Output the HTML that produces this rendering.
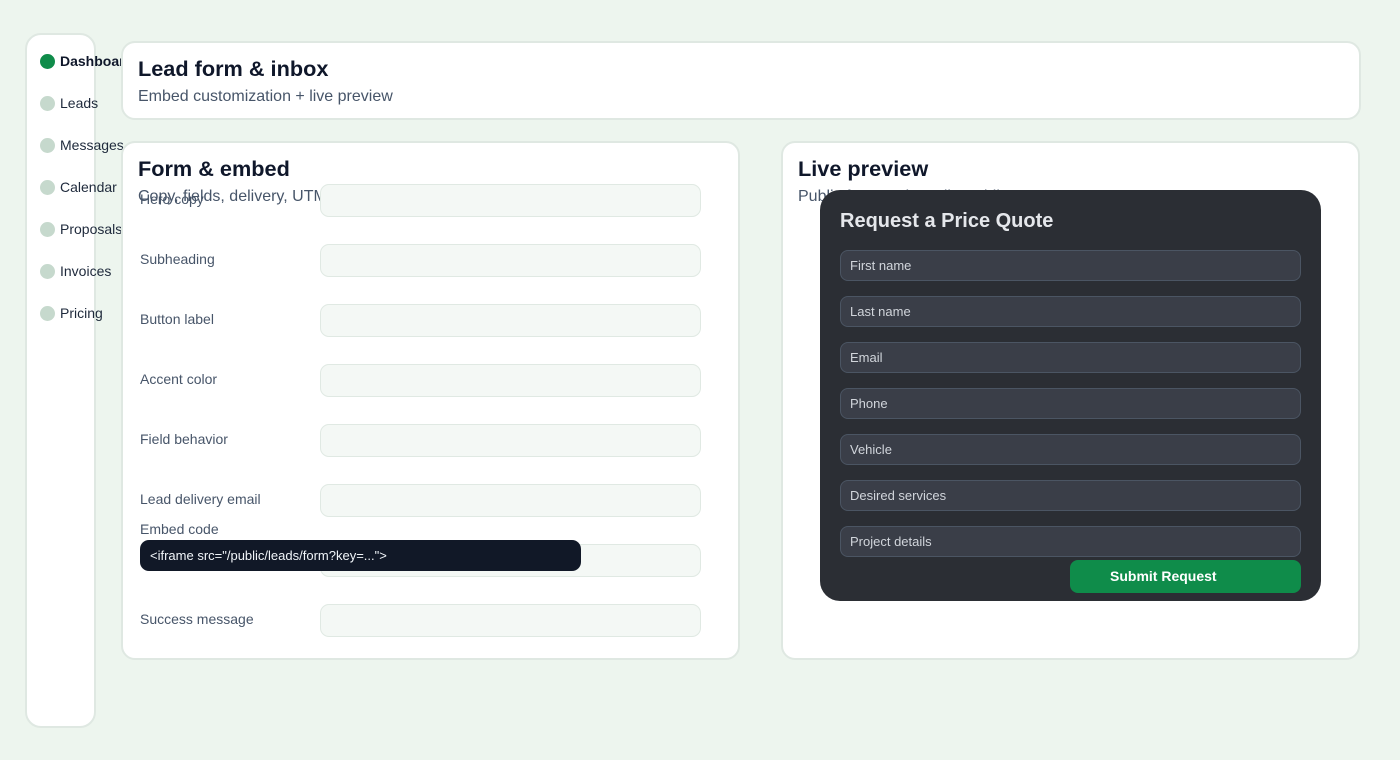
<!DOCTYPE html>
<html><head><meta charset="utf-8"><style>
*{box-sizing:border-box;margin:0;padding:0}
body{width:1400px;height:760px;background:#edf5ee;font-family:"Liberation Sans",sans-serif;position:relative;overflow:hidden;color:#0f172a}
.a{position:absolute}
.card{position:absolute;background:#fff;border:2px solid #dfe8e2;border-radius:14px}
.side{left:25px;top:33px;width:71px;height:695px;border-radius:16px}
.nav{position:absolute;left:13px;font-size:14px;color:#1e293b;white-space:nowrap}
.nav i{display:inline-block;width:15px;height:15px;border-radius:50%;background:#c6d9cd;vertical-align:-3px;margin-right:5px}
h2{font-size:21.7px;font-weight:700;color:#0f172a}
.sub{font-size:16px;color:#475569}
.lbl{position:absolute;left:140px;font-size:14px;color:#475569}
.inp{position:absolute;left:320px;width:381px;height:33px;background:#f4f8f5;border:1px solid #e0e9e3;border-radius:9px}
.pin{position:absolute;left:840px;width:461px;height:31px;background:#3a3e48;border:1px solid #4b5563;border-radius:8px;color:#d1d5db;font-size:13px;padding:7px 9px}
</style></head><body>
<div class="card side">
<div class="nav" style="top:18px;font-weight:700;color:#0f172a"><i style="background:#0f8c4a"></i>Dashboard</div>
<div class="nav" style="top:60px"><i></i>Leads</div>
<div class="nav" style="top:102px"><i></i>Messages</div>
<div class="nav" style="top:144px"><i></i>Calendar</div>
<div class="nav" style="top:186px"><i></i>Proposals</div>
<div class="nav" style="top:228px"><i></i>Invoices</div>
<div class="nav" style="top:270px"><i></i>Pricing</div>
</div>
<div class="card" style="left:121px;top:41px;width:1240px;height:79px">
<h2 class="a" style="left:15px;top:13px">Lead form &amp; inbox</h2>
<div class="sub a" style="left:15px;top:45px">Embed customization + live preview</div>
</div>
<div class="card" style="left:121px;top:141px;width:619px;height:519px">
<h2 class="a" style="left:15px;top:13px">Form &amp; embed</h2>
<div class="sub a" style="left:15px;top:45px">Copy, fields, delivery, UTM</div>
</div>
<div class="lbl" style="top:191px">Hero copy</div><div class="inp" style="top:184px"></div>
<div class="lbl" style="top:251px">Subheading</div><div class="inp" style="top:244px"></div>
<div class="lbl" style="top:311px">Button label</div><div class="inp" style="top:304px"></div>
<div class="lbl" style="top:371px">Accent color</div><div class="inp" style="top:364px"></div>
<div class="lbl" style="top:431px">Field behavior</div><div class="inp" style="top:424px"></div>
<div class="lbl" style="top:491px">Lead delivery email</div><div class="inp" style="top:484px"></div>
<div class="inp" style="top:544px"></div>
<div class="lbl" style="top:521px">Embed code</div>
<div class="a" style="left:140px;top:540px;width:441px;height:31px;background:#111827;border-radius:9px;color:#f1f5f9;font-size:13px;padding:8px 10px">&lt;iframe src="/public/leads/form?key=..."&gt;</div>
<div class="lbl" style="top:611px">Success message</div><div class="inp" style="top:604px"></div>
<div class="card" style="left:781px;top:141px;width:579px;height:519px">
<h2 class="a" style="left:15px;top:13px">Live preview</h2>
<div class="sub a" style="left:15px;top:45px">Public form updates live while you type</div>
</div>
<div class="a" style="left:820px;top:190px;width:501px;height:411px;background:#2b2e34;border-radius:20px"></div>
<div class="a" style="left:840px;top:210px;font-size:20px;font-weight:700;color:#e5e7eb">Request a Price Quote</div>
<div class="pin" style="top:250px">First name</div>
<div class="pin" style="top:296px">Last name</div>
<div class="pin" style="top:342px">Email</div>
<div class="pin" style="top:388px">Phone</div>
<div class="pin" style="top:434px">Vehicle</div>
<div class="pin" style="top:480px">Desired services</div>
<div class="pin" style="top:526px">Project details</div>
<div class="a" style="left:1070px;top:560px;width:231px;height:33px;background:#0f8c4a;border-radius:8px;color:#fff;font-size:14px;font-weight:700;padding-left:40px;line-height:33px">Submit Request</div>
</body></html>
